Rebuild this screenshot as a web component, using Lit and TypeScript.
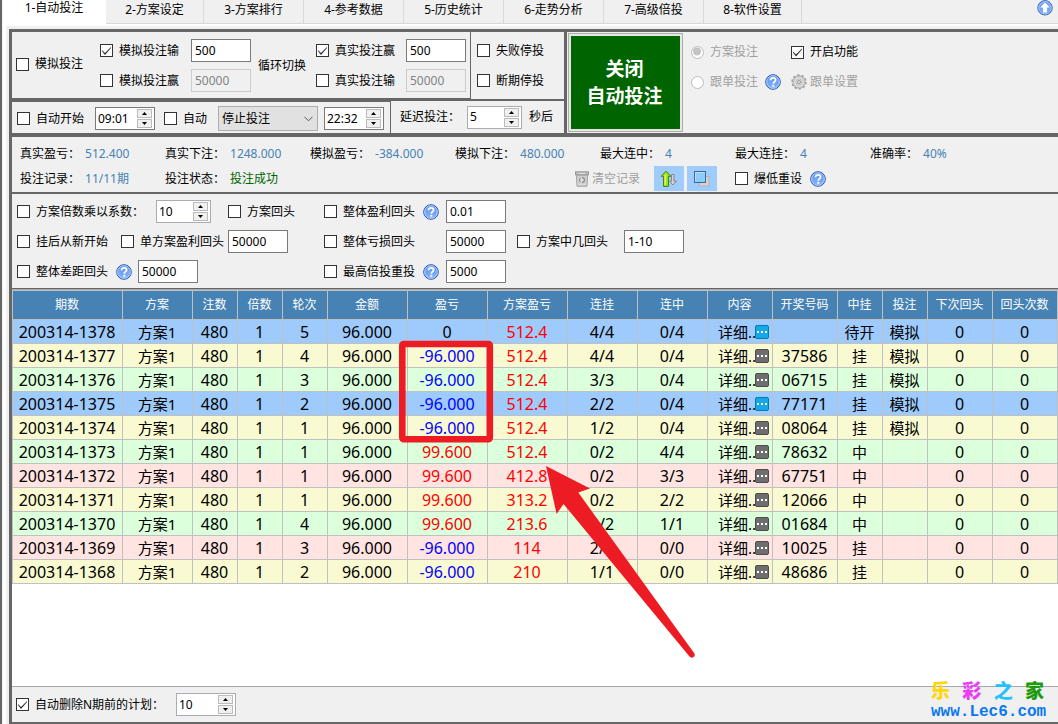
import { LitElement, html, svg, css, nothing } from "lit";
import { customElement } from "lit/decorators.js";
import { classMap } from "lit/directives/class-map.js";

interface Round {
  issue: string;
  step: string;
  profit: string;
  total: string;
  missed: string;
  hit: string;
  code: string;
  result: string;
  mode: string;
  tone: "blue" | "yellow" | "green" | "pink";
}

const row = (
  issue: string, step: string, profit: string, total: string, missed: string,
  hit: string, code: string, result: string, mode: string, tone: Round["tone"],
): Round => ({ issue, step, profit, total, missed, hit, code, result, mode, tone });

const rounds: Round[] = [
  row("200314-1378", "5", "0", "512.4", "4/4", "0/4", "", "待开", "模拟", "blue"),
  row("200314-1377", "4", "-96.000", "512.4", "4/4", "0/4", "37586", "挂", "模拟", "yellow"),
  row("200314-1376", "3", "-96.000", "512.4", "3/3", "0/4", "06715", "挂", "模拟", "green"),
  row("200314-1375", "2", "-96.000", "512.4", "2/2", "0/4", "77171", "挂", "模拟", "blue"),
  row("200314-1374", "1", "-96.000", "512.4", "1/2", "0/4", "08064", "挂", "模拟", "yellow"),
  row("200314-1373", "1", "99.600", "512.4", "0/2", "4/4", "78632", "中", "", "green"),
  row("200314-1372", "1", "99.600", "412.8", "0/2", "3/3", "67751", "中", "", "pink"),
  row("200314-1371", "1", "99.600", "313.2", "0/2", "2/2", "12066", "中", "", "yellow"),
  row("200314-1370", "4", "99.600", "213.6", "0/2", "1/1", "01684", "中", "", "green"),
  row("200314-1369", "3", "-96.000", "114", "2/2", "0/0", "10025", "挂", "", "pink"),
  row("200314-1368", "2", "-96.000", "210", "1/1", "0/0", "48686", "挂", "", "yellow"),
];

const columns: [string, number][] = [
  ["期数", 110], ["方案", 70], ["注数", 45], ["倍数", 45], ["轮次", 45], ["金额", 80],
  ["盈亏", 80], ["方案盈亏", 80], ["连挂", 70], ["连中", 70], ["内容", 65], ["开奖号码", 65],
  ["中挂", 45], ["投注", 45], ["下次回头", 65], ["回头次数", 65],
];

const tabs = ["1-自动投注", "2-方案设定", "3-方案排行", "4-参考数据", "5-历史统计", "6-走势分析", "7-高级倍投", "8-软件设置"];

const helpIcon = svg`<svg class="icon" width="16" height="16" viewBox="0 0 16 16">
  <defs><linearGradient id="hb" x1="0" y1="0" x2="0" y2="1"><stop offset="0" stop-color="#5b8fe6"/><stop offset="1" stop-color="#86b6fb"/></linearGradient></defs>
  <circle cx="8" cy="8" r="7.3" fill="url(#hb)" stroke="#2a55ad" stroke-width="1"/>
  <circle cx="8" cy="8" r="6.3" fill="none" stroke="#b5d1ff" stroke-width="1"/>
  <path d="M5.6 6.3C5.6 4.6 6.6 3.8 8.1 3.8S10.6 4.7 10.6 6C10.6 7.7 8.3 7.6 8.3 9.7" fill="none" stroke="#fff" stroke-width="1.8"/>
  <rect x="7.3" y="10.9" width="2" height="1.9" fill="#fff"/>
</svg>`;

const upIcon = svg`<svg width="16" height="16" viewBox="0 0 16 16">
  <circle cx="8" cy="7.8" r="7.2" fill="#6fa3f5" stroke="#3560b4"/>
  <circle cx="8" cy="7.8" r="6.2" fill="none" stroke="#a9c8fb"/>
  <path d="M8 2.6L12.8 7.4H10.1V12.6H5.9V7.4H3.2Z" fill="#fff"/>
</svg>`;

const gearIcon = svg`<svg class="icon" width="16" height="16" viewBox="0 0 16 16">
  <circle cx="8" cy="8" r="6.8" fill="#d0d0d0" stroke="#a2a2a2" stroke-width="1.8" stroke-dasharray="2.5 1.77"/>
  <circle cx="8" cy="8" r="5.8" fill="#dadada" stroke="#b0b0b0" stroke-width="0.8"/>
  <circle cx="8" cy="8" r="3.1" fill="none" stroke="#c2c2c2"/>
  <circle cx="8" cy="8" r="1.5" fill="#f2f2f2" stroke="#959595"/>
</svg>`;

const binIcon = svg`<svg width="14" height="16" viewBox="0 0 14 16">
  <path d="M1.4 4H12.6L12 15.3H2Z" fill="#cfcfcf" stroke="#a4a4a4"/>
  <rect x="0.5" y="0.8" width="13" height="3" fill="#bdbdbd" stroke="#989898"/>
  <rect x="4" y="2" width="6" height="1" fill="#e6e6e6"/>
  <circle cx="7" cy="9" r="2.4" fill="#e4e4e4" stroke="#8c8c8c" stroke-width="1.3" stroke-dasharray="3.6 1.4"/>
  <path d="M3 13.2H11" stroke="#e0e0e0"/>
</svg>`;

const sortIcon = svg`<svg width="18" height="18" viewBox="0 0 18 18">
  <path d="M11.5 4.5H14V11.2H16.3L12.8 15L9.6 11.2H11.5Z" fill="#d4d4d4" stroke="#858585"/>
  <path d="M6 1.2L10.8 6.3H8.4V16.4H3.6V6.3H1.2Z" fill="#a5e51b" stroke="#39810b"/>
  <path d="M5.2 5V15" stroke="#e3fb6a" stroke-width="1.4"/>
</svg>`;

const layersIcon = svg`<svg width="16" height="16" viewBox="0 0 16 16">
  <rect x="5.5" y="5.5" width="9.5" height="9.5" fill="#d2d2d2" stroke="#b4b4b4"/>
  <rect x="0.5" y="0.5" width="11" height="11" fill="#8dccfb" stroke="#38699a"/>
  <path d="M1.5 10.5V1.5H10.5" fill="none" stroke="#b9e0fc"/>
</svg>`;

const check = (label: string, checked = false, cls = "") => html`
  <label class="check ${cls}"><input type="checkbox" .checked=${checked} />${label}</label>`;

const field = (name: string, value: string, disabled = false) => html`
  <input class="field" type="text" aria-label=${name} .value=${value} ?disabled=${disabled} />`;

const spinner = (name: string, value: string, cls = "") => html`
  <span class="spinner ${cls}">
    <input type="text" aria-label=${name} .value=${value} />
    <span class="steps">
      <button type="button" aria-label="增加"><svg width="5" height="3" viewBox="0 0 5 3"><path d="M0 3L2.5 0L5 3Z"/></svg></button>
      <button type="button" aria-label="减少"><svg width="5" height="3" viewBox="0 0 5 3"><path d="M0 0H5L2.5 3Z"/></svg></button>
    </span>
  </span>`;

const help = (name: string) => html`<button type="button" class="bare" aria-label=${name}>${helpIcon}</button>`;

const stat = (label: string, value: string, good = false) => html`
  <div class="stat"><span>${label}：</span><span class=${good ? "good" : "value"}>${value}</span></div>`;

@customElement("app-root")
export class AppRoot extends LitElement {
  static styles = css`
    :host {
      display: block;
      font: 12px/16px "Noto Sans", "Noto Sans CJK SC", sans-serif;
      color: #000;
      --dark: #666;
      --face: #f0f0f0;
    }
    * { box-sizing: border-box; }
    input, button, select { font: inherit; color: inherit; margin: 0; }
    button { padding: 0; }
    svg { display: block; flex: none; }
    .window {
      min-height: 100vh;
      display: flex;
      flex-direction: column;
      background: var(--face);
      border-left: 2px solid var(--dark);
    }
    .tabs { display: flex; height: 26px; padding-left: 1px; border-bottom: 2px solid #fff; }
    .tab {
      width: 100px;
      padding: 0 0 4px;
      border: 0;
      border-right: 1px solid #d9d9d9;
      border-bottom: 1px solid #d9d9d9;
      background: var(--face);
    }
    .tab.current { width: 103px; padding-bottom: 8px; background: #fff; border-color: #fff; }
    .tab.edge { width: 98px; }
    .tab-rest { flex: 1; display: flex; justify-content: flex-end; align-items: flex-start; padding-right: 5px; border-bottom: 1px solid #d9d9d9; }
    .body { flex: 1; display: flex; flex-direction: column; margin-left: 1px; border-left: 3px solid #fff; padding: 3px 0 0 3px; }
    .main { flex: 1; display: flex; flex-direction: column; border: solid var(--dark); border-width: 3px 0 2px 3px; }

    .bare { border: 0; background: none; display: inline-flex; align-items: center; gap: 3px; }
    .bare:disabled { color: #a0a0a0; }
    .check { display: inline-flex; align-items: center; gap: 6px; white-space: nowrap; }
    .check input {
      appearance: none;
      flex: none;
      width: 13px;
      height: 13px;
      border: 1px solid #333;
      background: #fff;
    }
    .check input:checked::after {
      content: "";
      display: block;
      width: 11px;
      height: 11px;
      background: #222;
      clip-path: polygon(1px 5px, 4px 8px, 10px 2px, 10px 3px, 4px 10px, 1px 6px);
    }
    .check.off { color: #a0a0a0; }
    .check input[type="radio"] { border-color: #bcbcbc; border-radius: 50%; }
    .check input[type="radio"]:checked::after { clip-path: circle(4px at 5px 5px); background: #c4c4c4; }
    .field {
      width: 60px;
      height: 23px;
      padding: 0 3px;
      border: 1px solid #7a7a7a;
      border-radius: 0;
      background: #fff;
    }
    .field:disabled { color: #838383; background: var(--face); border-color: #ccc; }
    .spinner {
      display: inline-flex;
      width: 60px;
      height: 23px;
      padding: 1px 2px;
      border: 1px solid #ababb3;
      background: #fff;
    }
    .spinner.small { width: 55px; }
    .spinner.time { border-color: #7a7a7a; }
    .spinner input { flex: 1; min-width: 0; width: 0; padding: 0; border: 0; background: none; }
    .steps { display: grid; width: 15px; grid-template-rows: 1fr 1fr; gap: 1px; }
    .steps button { display: grid; place-items: center; border: 1px solid #bbb; background: var(--face); }

    .top { display: flex; background: var(--dark); border-bottom: 4px solid var(--dark); gap: 3px; }
    .rules { width: 552px; display: grid; gap: 2px; }
    .pair { display: flex; gap: 1px; }
    .face { background: var(--face); }
    .switches {
      width: 458px;
      padding: 7px 0 6px 4px;
      border-bottom: 1px solid var(--dark);
      display: flex;
      align-items: center;
    }
    .switches .lone { width: 84px; }
    .switches .cycle { width: 58px; }
    .switches .group { display: grid; grid-template-columns: 91px 67px; grid-auto-rows: 23px; row-gap: 7px; align-items: center; }
    .switches .group.real { grid-template-columns: 90px 60px; }
    .stops { flex: 1; padding: 7px 0 0 6px; display: grid; grid-template-rows: 23px 23px; row-gap: 7px; align-items: center; }
    .timing { width: 378px; height: 32px; padding: 2px 0 0 5px; border-top: 1px solid var(--dark); display: flex; align-items: center; }
    .timing .check { width: 78px; }
    .timing .check.short { width: 54px; margin-left: 9px; }
    .combo { display: grid; width: 100px; margin-right: 6px; align-items: center; }
    .combo select { grid-area: 1 / 1; appearance: none; height: 25px; padding: 0 3px; border: 1px solid #adadad; border-radius: 0; background: #e1e1e1; }
    .combo svg { grid-area: 1 / 1; justify-self: end; margin-right: 5px; pointer-events: none; }
    .delay { flex: 1; display: flex; align-items: center; gap: 7px; padding-left: 9px; }
    .run-area { flex: 1; display: flex; padding: 1px; }
    .run {
      width: 115px;
      height: 99px;
      padding: 0 2px 0 0;
      border: 1px solid #adadad;
      outline: 0;
      background: #006400;
      box-shadow: inset 0 0 0 2px #e6e6e6;
      color: #fff;
      font-size: 19px;
      font-weight: 700;
      line-height: 27px;
    }
    .modes { display: grid; grid-template-columns: 100px auto; grid-auto-rows: 30px; align-content: start; align-items: center; padding: 4px 0 0 8px; }
    .modes .cell { display: flex; align-items: center; gap: 7px; }

    .stats { height: 57px; padding: 9px 0 0 8px; border-bottom: 2px solid var(--dark); display: grid; grid-template-columns: 145px 145px 145px 145px 135px 135px auto; grid-template-rows: 16px 25px; row-gap: 4px; align-content: start; align-items: center; }
    .stat { display: flex; gap: 5px; white-space: nowrap; }
    .value { color: #4682b4; }
    .good { color: #006400; }
    .tools { grid-column: 4 / 6; display: flex; justify-content: flex-end; gap: 3px; padding-right: 18px; }
    .tools .bare { margin-right: 11px; }
    .toggle { width: 30px; height: 25px; border: 0; background: #9fcbfd; display: grid; place-items: center; }
    .reset { grid-column: 6 / 8; display: flex; align-items: center; gap: 8px; }

    .options { padding: 6px 0 5px 5px; border-bottom: 1px solid var(--dark); display: grid; grid-template-columns: 307px 122px 71px 107px auto; grid-auto-rows: 23px; row-gap: 7px; align-items: center; }
    .line { display: flex; align-items: center; }
    .line.a { gap: 17px; }
    .line.a .check:first-child { width: 122px; }
    .line.b .check:first-child { width: 104px; }
    .line.b .check + .check { width: 107px; }
    .line.c { gap: 6px; }
    .line.c .check, .limit .check { width: 93px; }
    .limit { display: flex; align-items: center; gap: 6px; }

    .sheet { flex: 1; position: relative; background: #fff; border-top: 1px solid #a8a8ac; border-bottom: 1px solid #a8a8ac; }
    table { width: 100%; table-layout: fixed; border-spacing: 0; border-left: 1px solid #c0c0c0; border-top: 1px solid #c0c0c0; }
    th, td { padding: 0 1px 0 0; border-right: 1px solid #c0c0c0; border-bottom: 1px solid #c0c0c0; text-align: center; white-space: nowrap; }
    th { height: 29px; background: #4682b4; color: #fff; font-weight: 400; }
    td { height: 24px; font-size: 16px; line-height: 20px; }
    td.text { font-size: 15px; }
    .blue { background: #9fcafc; }
    .yellow { background: #fafad2; }
    .green { background: #dcffdc; }
    .pink { background: #ffe4e1; }
    .red { color: #f00; }
    .minus { color: #00f; }
    .detail { display: flex; align-items: center; justify-content: space-between; padding: 0 2px 0 10px; }
    .detail span { flex: none; width: 37px; }
    .more { flex: none; width: 14px; height: 14px; border: 1px solid #4c4c4c; border-radius: 2px; background: #6e6e6e; display: grid; place-items: center; }
    .blue .more { border-color: #0879ae; background: #12a9e6; }
    .marks { position: absolute; left: 0; top: 0; pointer-events: none; }

    .foot { height: 35px; padding: 0 0 0 4px; display: flex; align-items: center; position: relative; }
    .foot .check { width: 160px; }
    .brand { position: absolute; right: 9px; bottom: 1px; width: 118px; display: grid; gap: 2px; }
    .brand-name { display: flex; justify-content: space-between; padding-right: 5px; font: 900 19px/22px "Noto Sans CJK SC", sans-serif; }
    .brand-url { font: 700 16px/18px "Liberation Mono", monospace; color: #0a78f0; text-decoration: none; }
    .c1 { color: #ffd60a; } .c2 { color: #e83cf5; } .c3 { color: #22c0ff; } .c4 { color: #1f9a10; }
  `;

  private renderRound(r: Round) {
    return html`<tr class=${r.tone}>
      <td>${r.issue}</td><td class="text">方案1</td><td>480</td><td>1</td><td>${r.step}</td><td>96.000</td>
      <td class=${classMap({ minus: r.profit.startsWith("-"), red: r.profit.startsWith("9") })}>${r.profit}</td>
      <td class="red">${r.total}</td><td>${r.missed}</td><td>${r.hit}</td>
      <td class="text"><div class="detail"><span>详细..</span><button type="button" class="more" aria-label="详细 ${r.issue}">
        <svg width="10" height="2" viewBox="0 0 10 2"><path d="M0 0H2V2H0ZM4 0H6V2H4ZM8 0H10V2H8Z" fill="#fff"/></svg></button></div></td>
      <td>${r.code || nothing}</td><td class="text">${r.result}</td><td class="text">${r.mode}</td><td>0</td><td>0</td>
    </tr>`;
  }

  render() {
    return html`<div class="window">
      <nav class="tabs">
        ${tabs.map((t, i) => html`<button type="button" class=${classMap({ tab: true, current: i === 0, edge: i === 1 || i === tabs.length - 1 })}>${t}</button>`)}
        <div class="tab-rest"><button type="button" class="bare" aria-label="收起">${upIcon}</button></div>
      </nav>
      <div class="body"><div class="main">
        <section class="top">
          <div class="rules">
            <div class="pair">
              <div class="switches face">
                <div class="lone">${check("模拟投注")}</div>
                <div class="group">
                  ${check("模拟投注输", true)}${field("模拟投注输", "500")}
                  ${check("模拟投注赢")}${field("模拟投注赢", "50000", true)}
                </div>
                <div class="cycle">循环切换</div>
                <div class="group real">
                  ${check("真实投注赢", true)}${field("真实投注赢", "500")}
                  ${check("真实投注输")}${field("真实投注输", "50000", true)}
                </div>
              </div>
              <div class="stops face">${check("失败停投")}${check("断期停投")}</div>
            </div>
            <div class="pair">
              <div class="timing face">
                ${check("自动开始")}${spinner("开始时间", "09:01", "time")}
                ${check("自动", false, "short")}
                <span class="combo">
                  <select aria-label="动作"><option>停止投注</option></select>
                  <svg width="9" height="6" viewBox="0 0 9 6"><path d="M0.5 0.8L4.5 4.8L8.5 0.8" fill="none" stroke="#555"/></svg>
                </span>
                ${spinner("停止时间", "22:32", "time")}
              </div>
              <div class="delay face"><span>延迟投注：</span>${spinner("延迟投注", "5", "small")}<span>秒后</span></div>
            </div>
          </div>
          <div class="run-area face">
            <button type="button" class="run">关闭<br />自动投注</button>
            <div class="modes">
              <label class="check off"><input type="radio" name="mode" checked disabled />方案投注</label>
              ${check("开启功能", true)}
              <div class="cell"><label class="check off"><input type="radio" name="mode" disabled />跟单投注</label>${help("跟单投注帮助")}</div>
              <button type="button" class="bare" disabled>${gearIcon}跟单设置</button>
            </div>
          </div>
        </section>
        <section class="stats">
          ${stat("真实盈亏", "512.400")}${stat("真实下注", "1248.000")}${stat("模拟盈亏", "-384.000")}${stat("模拟下注", "480.000")}
          ${stat("最大连中", "4")}${stat("最大连挂", "4")}${stat("准确率", "40%")}
          ${stat("投注记录", "11/11期")}${stat("投注状态", "投注成功", true)}
          <div class="tools">
            <button type="button" class="bare" disabled>${binIcon}清空记录</button>
            <button type="button" class="toggle" aria-label="排序">${sortIcon}</button>
            <button type="button" class="toggle" aria-label="窗口">${layersIcon}</button>
          </div>
          <div class="reset">${check("爆低重设")}${help("爆低重设帮助")}</div>
        </section>
        <section class="options">
          <div class="line a">${check("方案倍数乘以系数：")}${spinner("系数", "10", "small")}${check("方案回头")}</div>
          <div class="limit">${check("整体盈利回头")}${help("整体盈利回头帮助")}</div>${field("整体盈利回头", "0.01")}<span></span><span></span>
          <div class="line b">${check("挂后从新开始")}${check("单方案盈利回头")}${field("单方案盈利回头", "50000")}</div>
          <div class="limit">${check("整体亏损回头")}</div>${field("整体亏损回头", "50000")}
          ${check("方案中几回头")}${field("方案中几回头", "1-10")}
          <div class="line c">${check("整体差距回头")}${help("整体差距回头帮助")}${field("整体差距回头", "50000")}</div>
          <div class="limit">${check("最高倍投重投")}${help("最高倍投重投帮助")}</div>${field("最高倍投重投", "5000")}
        </section>
        <section class="sheet">
          <table>
            <colgroup>${columns.map(([, w]) => html`<col width=${w} />`)}</colgroup>
            <thead><tr>${columns.map(([name]) => html`<th>${name}</th>`)}</tr></thead>
            <tbody>${rounds.map((r) => this.renderRound(r))}</tbody>
          </table>
          <svg class="marks" width="700" height="380" viewBox="12 290 700 380" fill="#ed1c24">
            <rect x="402.3" y="344" width="87.5" height="95.3" rx="1.5" fill="none" stroke="#ed1c24" stroke-width="6.6" stroke-linejoin="round"/>
            <path d="M546 466L590 488.5L578.3 492.5L694.4 653.5Q695.5 656 693.3 657.3Q691 658.3 689.5 656.5L563.5 504L556.6 514Z"/>
          </svg>
        </section>
        <footer class="foot">
          ${check("自动删除N期前的计划：", true)}${spinner("期数", "10")}
          <div class="brand">
            <div class="brand-name"><span class="c1">乐</span><span class="c2">彩</span><span class="c3">之</span><span class="c4">家</span></div>
            <a class="brand-url" href="#">www.Lec6.com</a>
          </div>
        </footer>
      </div></div>
    </div>`;
  }
}
